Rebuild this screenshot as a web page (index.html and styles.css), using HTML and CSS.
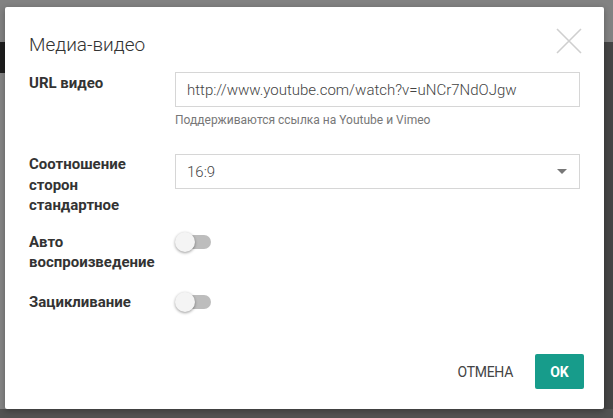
FILE: index.html
```html
<!DOCTYPE html>
<html lang="ru">

<head>
    <meta charset="UTF-8" />
    <meta name="viewport" content="width=device-width, initial-scale=1.0" />
    <title>Медиа-видео</title>
    <link rel="stylesheet" href="styles.css">
</head>

<body>

    <div class="backdrop">
        <div class="bg-top"></div>
        <div class="bg-main">
            <div class="bg-left">
                <div class="bg-dark"></div>
            </div>
            <div class="bg-side"></div>
        </div>
        <div class="bg-bottom"></div>
    </div>

    <section class="modal">
        <header class="modal-head">
            <h2 class="modal-title">Медиа-видео</h2>
            <button class="close" aria-label="Закрыть">
                <svg width="26" height="26" viewBox="0 0 26 26">
                    <path d="M1 1 L25 25 M25 1 L1 25" stroke="#cfcfcf" stroke-width="1.6" fill="none" />
                </svg>
            </button>
        </header>

        <div class="form">
            <div class="row">
                <label class="label">URL видео</label>
                <div class="field">
                    <div class="input">http://www.youtube.com/watch?v=uNCr7NdOJgw</div>
                    <p class="hint">Поддерживаются ссылка на Youtube и Vimeo</p>
                </div>
            </div>

            <div class="row">
                <label class="label">Соотношение сторон стандартное</label>
                <div class="field">
                    <div class="input select">
                        <span>16:9</span>
                        <span class="caret"></span>
                    </div>
                </div>
            </div>

            <div class="row">
                <label class="label">Авто воспроизведение</label>
                <div class="field">
                    <span class="toggle"><span class="thumb"></span></span>
                </div>
            </div>

            <div class="row">
                <label class="label">Зацикливание</label>
                <div class="field">
                    <span class="toggle"><span class="thumb"></span></span>
                </div>
            </div>
        </div>

        <footer class="modal-foot">
            <button class="btn btn-flat">ОТМЕНА</button>
            <button class="btn btn-ok">OK</button>
        </footer>
    </section>

</body>

</html>
```

FILE: styles.css
```css
body {
    margin: 0;
    padding: 0;
    width: 613px;
    height: 418px;
    overflow: hidden;
    font-family: Roboto, "Liberation Sans", sans-serif;
    color: #333;
    background-color: #555;
}

/* фон под модалкой */
.backdrop {
    display: flex;
    flex-direction: column;
    height: 418px;
}

.bg-top {
    height: 42px;
    background-color: #828282;
}

.bg-main {
    flex: 1;
    display: flex;
    justify-content: space-between;
    background-color: #7a7a7a;
}

.bg-left {
    width: 6px;
    padding-top: 0;
    background-color: #858585;
}

.bg-dark {
    height: 31px;
    background-color: #1e1e1e;
}

.bg-side {
    width: 40px;
    background-color: #454545;
}

.bg-bottom {
    height: 9px;
    background-color: #525252;
}

.modal {
    position: absolute;
    left: 5px;
    top: 7px;
    width: 599px;
    height: 402px;
    box-sizing: border-box;
    display: flex;
    flex-direction: column;
    background-color: #fff;
    border-radius: 2px;
    box-shadow: 0 2px 6px rgba(0, 0, 0, .3);
}

.modal-head {
    display: flex;
    justify-content: space-between;
    align-items: flex-start;
    padding: 21px 22px 0 24px;
}

.modal-title {
    margin: 0;
    padding-top: 5px;
    font-size: 19px;
    font-weight: 300;
    line-height: 24px;
    color: #333;
}

.close {
    padding: 0;
    border: none;
    background: none;
    width: 26px;
    height: 26px;
    cursor: pointer;
}

.form {
    padding: 15px 24px 0 24px;
}

.row {
    display: flex;
    margin-bottom: 16px;
}

.label {
    width: 146px;
    padding-right: 8px;
    box-sizing: border-box;
    flex-shrink: 0;
    font-size: 15px;
    font-weight: 700;
    line-height: 20.5px;
    color: #333;
}

.row:first-child .label {
    padding-top: 1px;
}

.field {
    flex: 1;
}

.input {
    box-sizing: border-box;
    height: 35px;
    padding: 0 11px;
    display: flex;
    align-items: center;
    border: 1px solid #d6d6d6;
    font-size: 15px;
    font-weight: 300;
    color: #444;
}

.select {
    justify-content: space-between;
}

.caret {
    width: 0;
    height: 0;
    margin-right: 1px;
    border-left: 5px solid transparent;
    border-right: 5px solid transparent;
    border-top: 5px solid #777;
}

.hint {
    margin: 6px 0 0;
    font-size: 12px;
    line-height: 15px;
    color: #777;
}

.row:first-child {
    margin-bottom: 26px;
}

.row:nth-child(3) {
    margin-bottom: 19px;
}

.toggle {
    position: relative;
    display: block;
    width: 36px;
    height: 20px;
    margin-top: 0;
}

.toggle::before {
    content: "";
    position: absolute;
    left: 6px;
    top: 3px;
    width: 30px;
    height: 14px;
    border-radius: 7px;
    background-color: #bdbdbd;
}

.thumb {
    position: absolute;
    left: 0;
    top: 0;
    width: 20px;
    height: 20px;
    border-radius: 50%;
    background-color: #f4f4f4;
    box-shadow: 0 1px 3px rgba(0, 0, 0, .4);
}

.modal-foot {
    margin-top: auto;
    display: flex;
    justify-content: flex-end;
    align-items: center;
    gap: 14px;
    padding: 0 20px 20px 0;
}

.btn {
    height: 35px;
    padding: 0 8px;
    border: none;
    border-radius: 2px;
    font-family: Roboto, "Liberation Sans", sans-serif;
    font-size: 14px;
    cursor: pointer;
}

.btn-flat {
    background: none;
    color: #444;
    letter-spacing: -0.3px;
}

.btn-ok {
    width: 49px;
    padding: 0;
    background-color: #179c8b;
    color: #fff;
    font-weight: 700;
}
```
